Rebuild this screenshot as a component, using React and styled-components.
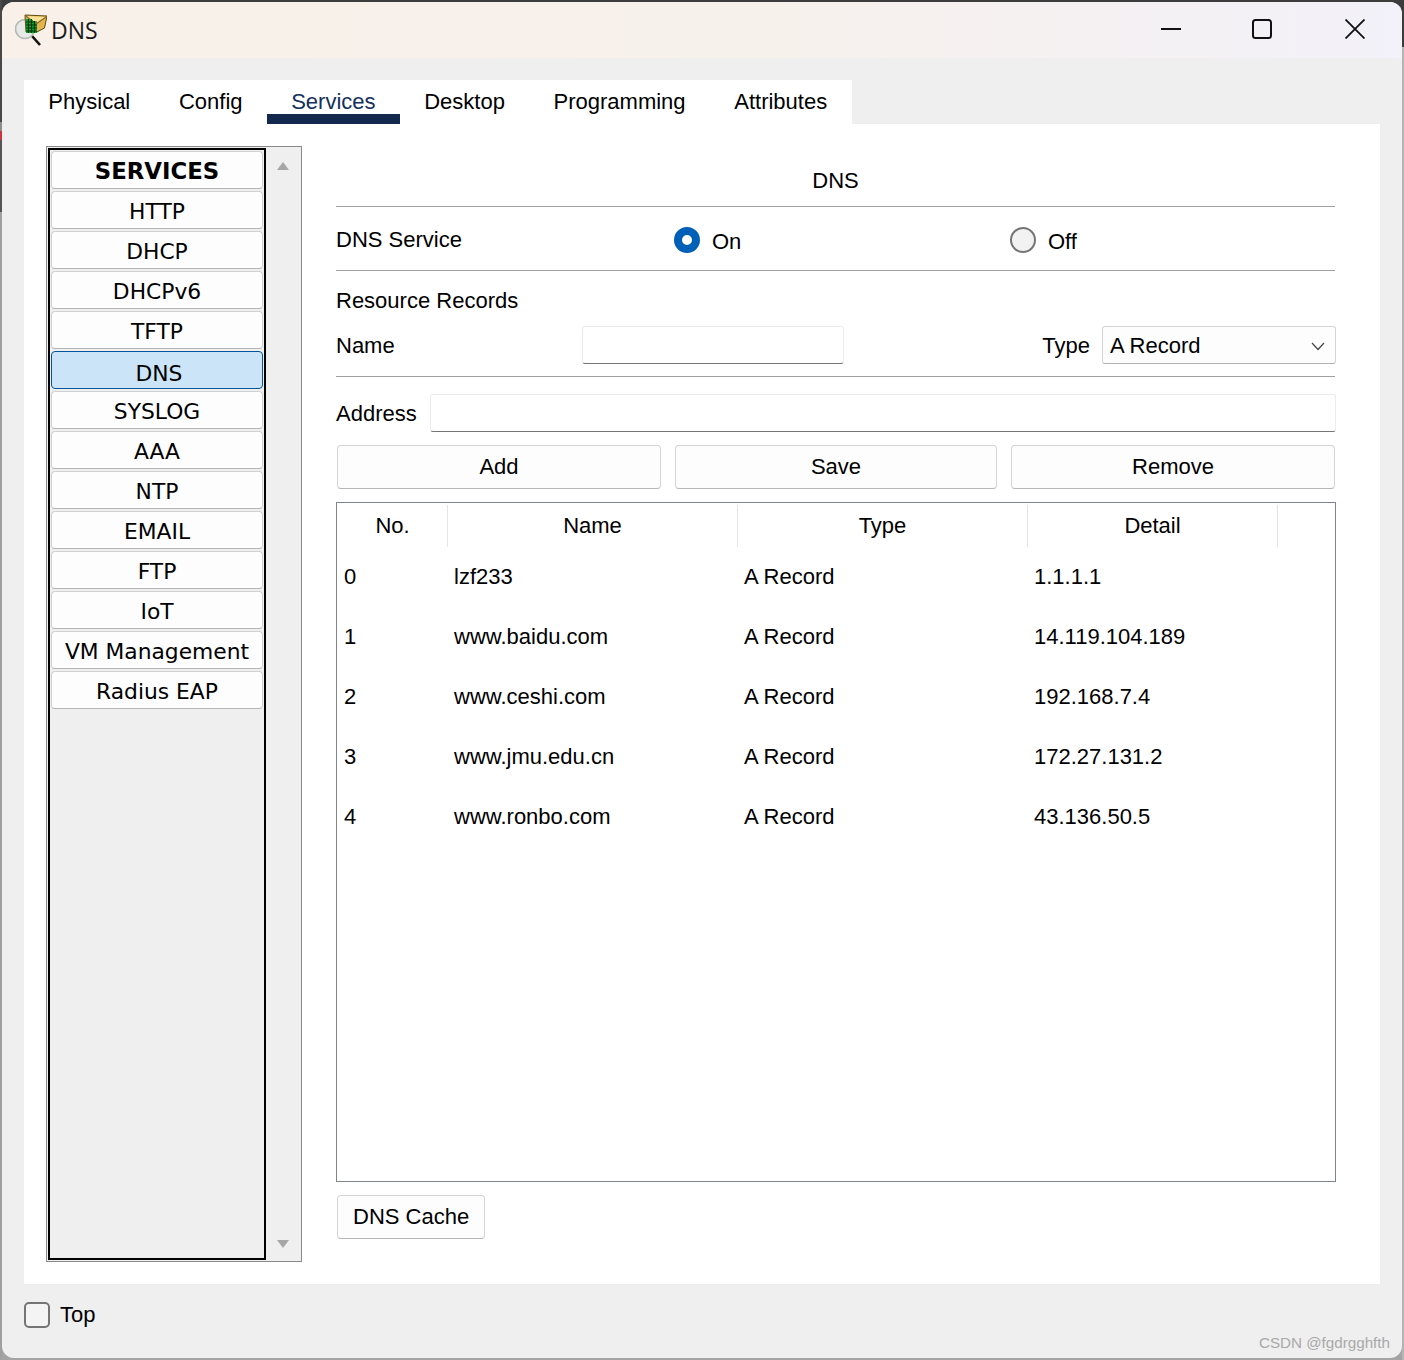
import React from 'react';
import styled, { createGlobalStyle } from 'styled-components';

const GlobalStyle = createGlobalStyle`
  html, body {
    margin: 0;
    padding: 0;
    background: #3a3a3a;
  }

  * {
    box-sizing: border-box;
  }
`;

// the thin strip of desktop that shows round the window
const Desktop = styled.div`
  width: 1404px;
  height: 1360px;
  padding: 2px;
  background:
    linear-gradient(180deg, #484848 0 122px, #8c8c8c 122px 131px, #c8373d 131px 140px, #555 140px 212px, #a0a0a0 212px) left / 2px 100% no-repeat,
    linear-gradient(180deg, #3c3c3c 0 47px, #b4b4b4 47px) right / 2px 100% no-repeat,
    linear-gradient(180deg, #3c3c3c 0 50%, #a4a4a4 50%);
`;

const WindowFrame = styled.div`
  position: relative;
  height: 100%;
  display: flex;
  flex-direction: column;
  background: #efefef;
  border-radius: 12px;
  overflow: hidden;
  font-family: 'Liberation Sans', Arial, sans-serif;
  font-size: 22px;
  color: #000;
`;

const TitleBar = styled.header`
  height: 56px;
  flex: none;
  display: flex;
  align-items: center;
  padding-left: 13px;
  background: linear-gradient(90deg, #f9f1e9 0%, #f7f1ec 55%, #f3f1f9 100%);
`;

const AppTitle = styled.span`
  margin-left: 4px;
  font-family: 'Open Sans', sans-serif;
  font-size: 23px;
  line-height: 56px;
  color: #1a1a1a;
`;

const WindowControls = styled.div`
  margin-left: auto;
  display: flex;
  align-items: center;
  padding: 0 37px 2px 0;
  gap: 71px;

  svg:last-child {
    margin-left: 2px;
  }
`;

const Workspace = styled.div`
  padding: 22px 22px 0;
`;

const TabStrip = styled.nav`
  display: inline-flex;
  vertical-align: top;
  background: #fff;
`;

const Tab = styled.div`
  height: 44px;
  line-height: 44px;
  padding: 0 24.33px;
  color: ${(p) => (p.$active ? '#13315c' : '#000')};
  box-shadow: ${(p) => (p.$active ? 'inset 0 -10px 0 #12294d' : 'none')};
`;

const Panel = styled.section`
  display: flex;
  gap: 34px;
  height: 1160px;
  padding: 22px 44px 22px 22px;
  background: #fff;
`;

const Sidebar = styled.aside`
  width: 256px;
  flex: none;
  display: flex;
  padding: 1px;
  background: #efefef;
  border: 1px solid #8a8a8a;
`;

const ServiceList = styled.div`
  width: 218px;
  flex: none;
  display: flex;
  flex-direction: column;
  gap: 2px;
  padding: 1px;
  border: 2px solid #000;
`;

const ServiceItem = styled.div`
  height: 38px;
  flex: none;
  display: flex;
  align-items: center;
  justify-content: center;
  padding: ${(p) => (p.$selected ? '6px 0 0 4px' : '2px 0 0')};
  font-family: 'DejaVu Sans', Verdana, sans-serif;
  font-size: ${(p) => (p.$heading ? '22.8px' : '21.8px')};
  font-weight: ${(p) => (p.$heading ? 700 : 400)};
  background: ${(p) => (p.$selected ? '#cce4f7' : '#fdfdfd')};
  border: 1px solid ${(p) => (p.$selected ? '#005499' : '#d0d0d0')};
  border-bottom-color: ${(p) => (p.$selected ? '#005499' : '#b4b4b4')};
  border-radius: 4px;
`;

const ScrollTrack = styled.div`
  flex: 1;
  display: flex;
  flex-direction: column;
  align-items: center;
  justify-content: space-between;
  padding: 14px 0 12px;
`;

const ScrollArrow = styled.span`
  width: 0;
  height: 0;
  border-left: 6px solid transparent;
  border-right: 6px solid transparent;
  border-${(p) => (p.$down ? 'top' : 'bottom')}: 8px solid #a6a6a6;
`;

const Main = styled.main`
  width: 1000px;
  flex: none;
  line-height: 26px;
`;

const SectionTitle = styled.div`
  padding: 22px 0 12px;
  text-align: center;
  border-bottom: 1px solid #a0a0a0;
  margin-right: 1px;
`;

const ServiceRow = styled.div`
  height: 64px;
  display: grid;
  grid-template-columns: 338px 336px 1fr;
  align-items: center;
  border-bottom: 1px solid #a0a0a0;
  margin-right: 1px;
`;

const RowLabel = styled.span`
  padding-top: 3px;
`;

const RadioLabel = styled.label`
  display: flex;
  align-items: center;
  gap: 12px;
  padding-top: 3px;
`;

const RadioText = styled.span`
  padding-top: 4px;
`;

const Radio = styled.input.attrs({ type: 'radio' })`
  appearance: none;
  width: 26px;
  height: 26px;
  margin: 0;
  border-radius: 50%;
  background: #f2f2f2;
  border: 2px solid #757575;

  &:checked {
    background: #fff;
    border: 8px solid #0060b8;
  }
`;

const SubHeading = styled.div`
  padding-top: 17px;
  margin-bottom: 12px;
`;

const NameRow = styled.div`
  display: flex;
  align-items: center;
  padding-bottom: 12px;
  border-bottom: 1px solid #a0a0a0;
  margin-right: 1px;
`;

const FieldLabel = styled.label`
  width: ${(p) => p.$width || 'auto'};
  flex: none;
  padding-top: 2px;
`;

const TextInput = styled.input`
  height: 38px;
  width: ${(p) => p.$width};
  flex: ${(p) => (p.$grow ? 1 : 'none')};
  padding: 0 8px;
  background: #fff;
  border: 1px solid #ececec;
  border-bottom: 1px solid #757575;
  border-radius: 3px;
  outline: none;
`;

const TypeLabel = styled.label`
  margin-left: auto;
  margin-right: 12px;
  padding-top: 2px;
`;

const SelectBox = styled.div`
  width: 234px;
  height: 38px;
  margin-right: -1px;
  display: flex;
  align-items: center;
  justify-content: space-between;
  padding: 2px 10px 0 7px;
  background: #fdfdfd;
  border: 1px solid #d4d4d4;
  border-bottom-color: #b0b0b0;
  border-radius: 3px;
`;

const AddressRow = styled.div`
  display: flex;
  align-items: center;
  margin-top: 17px;
`;

const ButtonRow = styled.div`
  display: grid;
  grid-template-columns: 324px 322px 324px;
  gap: 14px;
  padding: 0 1px;
  margin-top: 13px;
`;

const PushButton = styled.button`
  height: 44px;
  padding: 0 15px;
  font: inherit;
  white-space: nowrap;
  color: #000;
  background: #fdfdfd;
  border: 1px solid #d4d4d4;
  border-bottom-color: #b6b6b6;
  border-radius: 4px;
`;

const CacheButton = styled(PushButton)`
  display: block;
  width: 148px;
  margin: 13px 0 0 1px;
`;

const RecordTable = styled.div`
  height: 680px;
  margin-top: 13px;
  background: #fff;
  border: 1px solid #7f858c;
`;

const TableRow = styled.div`
  display: grid;
  grid-template-columns: 110px 290px 290px 250px;
  height: ${(p) => (p.$header ? '44px' : '60px')};
  padding-left: ${(p) => (p.$header ? '1px' : '0')};
  align-items: center;
`;

const HeaderCell = styled.div`
  height: 42px;
  line-height: 42px;
  margin-top: 2px;
  text-align: center;
  border-right: 1px solid #e4e4e4;
`;

const Cell = styled.div`
  padding-left: 7px;
`;

const Footer = styled.footer`
  display: flex;
  align-items: center;
  gap: 10px;
  padding: 18px 22px 0;
  line-height: 26px;
`;

const CheckBox = styled.input.attrs({ type: 'checkbox' })`
  appearance: none;
  width: 26px;
  height: 26px;
  margin: 0;
  background: #f4f4f4;
  border: 2px solid #757575;
  border-radius: 5px;
`;

const Watermark = styled.span`
  position: absolute;
  right: 12px;
  bottom: 6px;
  font-size: 15.2px;
  line-height: 18px;
  color: #a9a9a9;
`;

const services = ['HTTP', 'DHCP', 'DHCPv6', 'TFTP', 'DNS', 'SYSLOG', 'AAA', 'NTP', 'EMAIL', 'FTP', 'IoT', 'VM Management', 'Radius EAP'];
const tabs = ['Physical', 'Config', 'Services', 'Desktop', 'Programming', 'Attributes'];
const records = [
  ['0', 'lzf233', 'A Record', '1.1.1.1'],
  ['1', 'www.baidu.com', 'A Record', '14.119.104.189'],
  ['2', 'www.ceshi.com', 'A Record', '192.168.7.4'],
  ['3', 'www.jmu.edu.cn', 'A Record', '172.27.131.2'],
  ['4', 'www.ronbo.com', 'A Record', '43.136.50.5'],
];

function DnsIcon() {
  return (
    <svg width="32" height="32" viewBox="0 0 32 32">
      <path d="M17 22 L25 31" stroke="#111" strokeWidth="2.6" fill="none" />
      <circle cx="10" cy="15" r="9.5" fill="#e6e9e6" stroke="#b4b8b4" strokeWidth="1.6" />
      <path d="M10 1 L32 2 L29.5 14 L21 18.5 L11 18 Z" fill="#e3b54a" stroke="#5f4a14" strokeWidth="1" />
      <path d="M11 2 L21 10 L31 3" fill="#f8e19a" stroke="#8a6a1e" strokeWidth="1.2" />
      <path d="M11 5 L16 5 L22 10 L22 19 L11 19 Z" fill="#0da52c" />
      <path d="M11 8 H22 M11 11 H22 M11 14 H22 M11 17 H22 M13.5 5 V19 M16.5 5 V19 M19.5 7 V19" stroke="#04330f" strokeWidth="1.1" />
    </svg>
  );
}

function MinimizeIcon() {
  return (
    <svg width="20" height="20" viewBox="0 0 20 20">
      <path d="M0 10 H20" stroke="#111" strokeWidth="2" />
    </svg>
  );
}

function MaximizeIcon() {
  return (
    <svg width="20" height="20" viewBox="0 0 20 20">
      <rect x="1" y="1" width="18" height="18" rx="2.5" fill="none" stroke="#111" strokeWidth="2" />
    </svg>
  );
}

function CloseIcon() {
  return (
    <svg width="20" height="20" viewBox="0 0 20 20">
      <path d="M0.5 0.5 L19.5 19.5 M19.5 0.5 L0.5 19.5" stroke="#111" strokeWidth="1.8" />
    </svg>
  );
}

function Chevron() {
  return (
    <svg width="14" height="9" viewBox="0 0 14 9">
      <path d="M1 1 L7 7.5 L13 1" fill="none" stroke="#444" strokeWidth="1.2" />
    </svg>
  );
}

export default function App() {
  return (
    <>
      <GlobalStyle />
      <Desktop>
        <WindowFrame>
          <TitleBar>
            <DnsIcon />
            <AppTitle>DNS</AppTitle>
            <WindowControls>
              <MinimizeIcon />
              <MaximizeIcon />
              <CloseIcon />
            </WindowControls>
          </TitleBar>
          <Workspace>
            <TabStrip>
              {tabs.map((tab) => (
                <Tab key={tab} $active={tab === 'Services'}>{tab}</Tab>
              ))}
            </TabStrip>
            <Panel>
              <Sidebar>
                <ServiceList>
                  <ServiceItem $heading>SERVICES</ServiceItem>
                  {services.map((name) => (
                    <ServiceItem key={name} $selected={name === 'DNS'}>{name}</ServiceItem>
                  ))}
                </ServiceList>
                <ScrollTrack>
                  <ScrollArrow />
                  <ScrollArrow $down />
                </ScrollTrack>
              </Sidebar>
              <Main>
                <SectionTitle>DNS</SectionTitle>
                <ServiceRow>
                  <RowLabel>DNS Service</RowLabel>
                  <RadioLabel>
                    <Radio name="dns-service" defaultChecked />
                    <RadioText>On</RadioText>
                  </RadioLabel>
                  <RadioLabel>
                    <Radio name="dns-service" />
                    <RadioText>Off</RadioText>
                  </RadioLabel>
                </ServiceRow>
                <SubHeading>Resource Records</SubHeading>
                <NameRow>
                  <FieldLabel $width="246px">Name</FieldLabel>
                  <TextInput $width="262px" />
                  <TypeLabel>Type</TypeLabel>
                  <SelectBox>
                    A Record
                    <Chevron />
                  </SelectBox>
                </NameRow>
                <AddressRow>
                  <FieldLabel $width="94px">Address</FieldLabel>
                  <TextInput $grow />
                </AddressRow>
                <ButtonRow>
                  <PushButton>Add</PushButton>
                  <PushButton>Save</PushButton>
                  <PushButton>Remove</PushButton>
                </ButtonRow>
                <RecordTable>
                  <TableRow $header>
                    <HeaderCell>No.</HeaderCell>
                    <HeaderCell>Name</HeaderCell>
                    <HeaderCell>Type</HeaderCell>
                    <HeaderCell>Detail</HeaderCell>
                  </TableRow>
                  {records.map((row) => (
                    <TableRow key={row[0]}>
                      {row.map((value) => (
                        <Cell key={value}>{value}</Cell>
                      ))}
                    </TableRow>
                  ))}
                </RecordTable>
                <CacheButton>DNS Cache</CacheButton>
              </Main>
            </Panel>
          </Workspace>
          <Footer>
            <CheckBox />
            Top
          </Footer>
          <Watermark>CSDN @fgdrgghfth</Watermark>
        </WindowFrame>
      </Desktop>
    </>
  );
}
